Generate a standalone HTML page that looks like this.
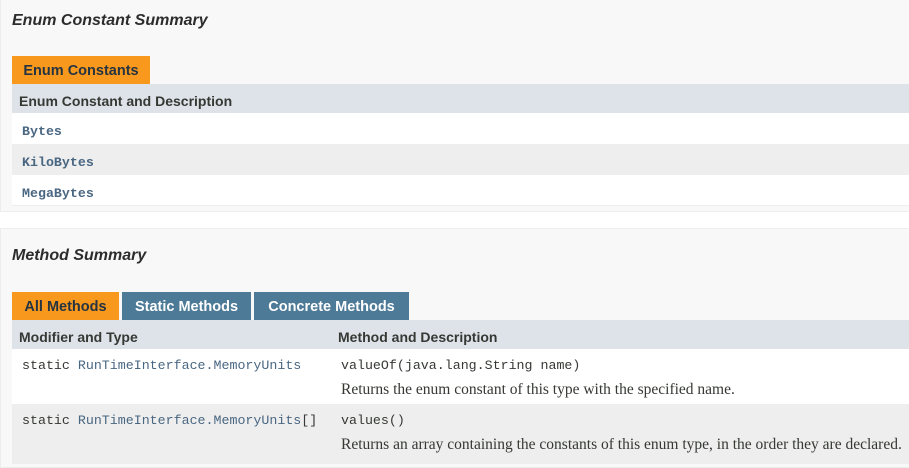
<!DOCTYPE html>
<html><head><style>
body{margin:0;width:909px;height:460px;overflow:hidden;background:#fff;position:relative;font-family:"Liberation Sans",Arial,sans-serif;color:#353833}
div{position:absolute;box-sizing:border-box}
.box{left:0;width:920px;background:#f8f8f8;border:1px solid #ededed}
.h3{font-size:16px;font-weight:bold;font-style:italic;color:#2c2c2c;left:12px}
.tab{height:28px;font-size:14.5px;font-weight:bold;line-height:28px;text-align:center;padding-top:1px}
.or{background:#f8981d;color:#253441}
.bl{background:#4d7a97;color:#fff}
.hd{background:#dee3e9;font-size:14px;font-weight:bold;line-height:29px;left:12px;width:900px;height:29px;padding-top:3px}
.row{left:12px;width:900px}
.mono{font-family:"Liberation Mono",monospace;font-size:13.3px}
a{color:#4a6782;text-decoration:none}
.ser{font-family:"Liberation Serif",serif;font-size:15.5px}
</style></head><body>
<div class="box" style="top:-1px;height:213px"></div>
<div class="h3" style="top:12px">Enum Constant Summary</div>
<div class="tab or" style="left:12px;top:56px;width:138px">Enum Constants</div>
<div class="hd" style="top:84px;padding-left:7px">Enum Constant and Description</div>
<div class="row" style="top:113px;height:31px;background:#fff"></div>
<div class="row" style="top:144px;height:31px;background:#eee"></div>
<div class="row" style="top:175px;height:31px;background:#fff;border-bottom:1px solid #eee"></div>
<div class="mono" style="left:22px;top:124px;font-weight:bold"><a>Bytes</a></div>
<div class="mono" style="left:22px;top:155px;font-weight:bold"><a>KiloBytes</a></div>
<div class="mono" style="left:22px;top:186px;font-weight:bold"><a>MegaBytes</a></div>

<div class="box" style="top:228px;height:240px"></div>
<div class="h3" style="top:247px">Method Summary</div>
<div class="tab or" style="left:12px;top:292px;width:107px">All Methods</div>
<div class="tab bl" style="left:122px;top:292px;width:129px">Static Methods</div>
<div class="tab bl" style="left:254px;top:292px;width:155px">Concrete Methods</div>
<div class="hd" style="top:320px;padding-left:7px">Modifier and Type</div>
<div style="left:338px;top:323px;font-size:14px;font-weight:bold;line-height:29px">Method and Description</div>
<div class="row" style="top:349px;height:55px;background:#fff"></div>
<div class="row" style="top:404px;height:60px;background:#eee"></div>
<div class="mono" style="left:22px;top:358px">static <a>RunTimeInterface.MemoryUnits</a></div>
<div class="mono" style="left:341px;top:358px">valueOf(java.lang.String&nbsp;name)</div>
<div class="ser" style="left:341px;top:381px">Returns the enum constant of this type with the specified name.</div>
<div class="mono" style="left:22px;top:413px">static <a>RunTimeInterface.MemoryUnits</a>[]</div>
<div class="mono" style="left:341px;top:413px">values()</div>
<div class="ser" style="left:341px;top:436px">Returns an array containing the constants of this enum type, in the order they are declared.</div>
</body></html>
